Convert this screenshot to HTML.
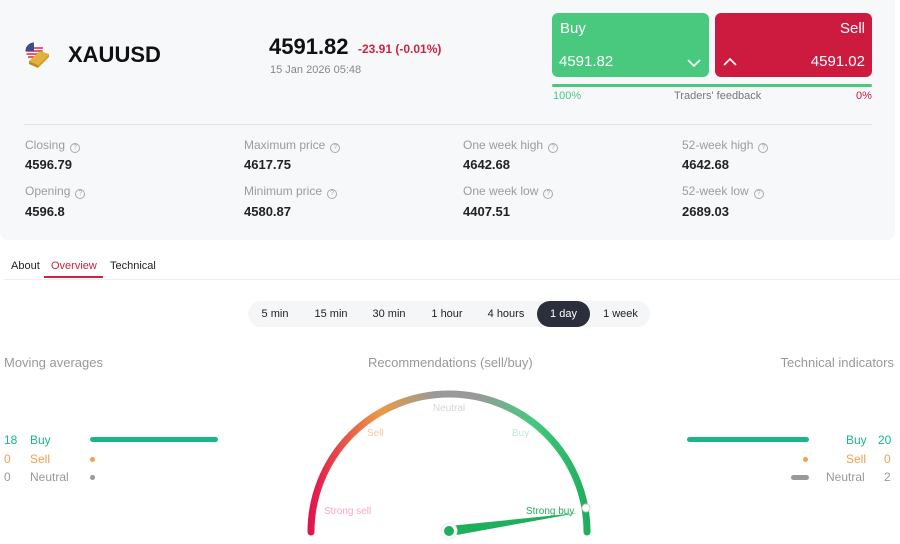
<!DOCTYPE html>
<html><head><meta charset="utf-8"><style>
*{margin:0;padding:0;box-sizing:border-box}
body{width:900px;height:544px;overflow:hidden;background:#fff;font-family:"Liberation Sans",Arial,sans-serif;position:relative;color:#222}
.abs{position:absolute}
.panel{left:0;top:0;width:895px;height:240px;background:#f7f8fa;border-radius:0 0 8px 8px}
.lbl{font-size:12px;color:#9a9ca3}
.val{font-size:13px;font-weight:bold;color:#222}
.q{display:inline-block;width:10px;height:10px;border:1px solid #aaa;border-radius:50%;font-size:7px;line-height:8px;text-align:center;color:#aaa;margin-left:5px;vertical-align:0}
.btn{top:13px;width:157px;height:64px;border-radius:6px;color:#fff}
.tf{font-size:11px}
.tab{font-size:11px;top:260px}
.seg{top:301px;left:248px;width:402px;height:26px;background:#f5f6f8;border-radius:13px}
.seg span{position:absolute;top:0;height:26px;line-height:27px;font-size:11px;color:#222;text-align:center}
.h{font-size:13px;color:#999;top:355px}
.row{font-size:12px}
</style></head><body>
<div class="abs panel"></div>
<svg class="abs" style="left:24px;top:41px" width="30" height="30" viewBox="0 0 30 30">
<circle cx="10" cy="10" r="8.5" fill="#fff"/>
<path d="M2 7h17M1.6 10h17M2.5 13h15M4 16h12" stroke="#d7263d" stroke-width="1.6"/>
<path d="M10 1.5A8.5 8.5 0 0 0 1.5 10H10z" fill="#3c4c8c"/>
<path d="M5 20l11-10 9 3-11 11z" fill="#e4b13a"/><path d="M5 20l9 4 0 3-9-4z" fill="#c28a1c"/><path d="M14 24l11-11v3l-11 11z" fill="#d49e2b"/>
</svg>
<div class="abs" style="left:68px;top:42px;font-size:22px;font-weight:bold;color:#111">XAUUSD</div>
<div class="abs" style="left:269px;top:34px;font-size:22px;font-weight:bold;color:#111">4591.82</div>
<div class="abs" style="left:358px;top:42px;font-size:12px;font-weight:bold;color:#d0223f">-23.91 (-0.01%)</div>
<div class="abs" style="left:270px;top:64px;font-size:11px;color:#888">15 Jan 2026 05:48</div>
<div class="abs btn" style="left:552px;background:#48c97e"><div class="abs" style="left:8px;top:7px;font-size:15px">Buy</div><div class="abs" style="left:7px;top:40px;font-size:15px">4591.82</div>
<svg class="abs" style="left:135px;top:45px" width="14" height="10"><path d="M1 2l6 6 6-6" stroke="#fff" stroke-width="1.6" fill="none"/></svg></div>
<div class="abs btn" style="left:715px;background:#cd1b40"><div class="abs" style="right:7px;top:7px;font-size:15px">Sell</div><div class="abs" style="right:7px;top:40px;font-size:15px">4591.02</div>
<svg class="abs" style="left:8px;top:44px" width="14" height="10"><path d="M1 8l6-6 6 6" stroke="#fff" stroke-width="1.6" fill="none"/></svg></div>
<div class="abs" style="left:552px;top:84px;width:320px;height:3px;background:#48c97e;border-radius:2px"></div>
<div class="abs tf" style="left:553px;top:90px;color:#48c97e">100%</div>
<div class="abs tf" style="left:674px;top:90px;color:#777">Traders' feedback</div>
<div class="abs tf" style="left:856px;top:90px;color:#cd1b40">0%</div>
<div class="abs" style="left:24px;top:124px;width:848px;height:1px;background:#e3e4e8"></div>
<div class="abs lbl" style="left:25px;top:138px">Closing<span class="q">?</span></div><div class="abs val" style="left:25px;top:157px">4596.79</div>
<div class="abs lbl" style="left:25px;top:184px">Opening<span class="q">?</span></div><div class="abs val" style="left:25px;top:204px">4596.8</div>
<div class="abs lbl" style="left:244px;top:138px">Maximum price<span class="q">?</span></div><div class="abs val" style="left:244px;top:157px">4617.75</div>
<div class="abs lbl" style="left:244px;top:184px">Minimum price<span class="q">?</span></div><div class="abs val" style="left:244px;top:204px">4580.87</div>
<div class="abs lbl" style="left:463px;top:138px">One week high<span class="q">?</span></div><div class="abs val" style="left:463px;top:157px">4642.68</div>
<div class="abs lbl" style="left:463px;top:184px">One week low<span class="q">?</span></div><div class="abs val" style="left:463px;top:204px">4407.51</div>
<div class="abs lbl" style="left:682px;top:138px">52-week high<span class="q">?</span></div><div class="abs val" style="left:682px;top:157px">4642.68</div>
<div class="abs lbl" style="left:682px;top:184px">52-week low<span class="q">?</span></div><div class="abs val" style="left:682px;top:204px">2689.03</div>
<div class="abs tab" style="left:11px">About</div>
<div class="abs tab" style="left:51px;color:#d0223f">Overview</div>
<div class="abs tab" style="left:110px">Technical</div>
<div class="abs" style="left:44px;top:276px;width:59px;height:2px;background:#d0223f"></div>
<div class="abs" style="left:4px;top:279px;width:896px;height:1px;background:#eceef1"></div>
<div class="abs seg">
<span style="left:8px;width:38px">5 min</span><span style="left:62px;width:42px">15 min</span><span style="left:120px;width:42px">30 min</span><span style="left:178px;width:42px">1 hour</span><span style="left:235px;width:46px">4 hours</span>
<span style="left:289px;width:53px;background:#2b2e3b;color:#fff;border-radius:13px">1 day</span><span style="left:350px;width:45px">1 week</span></div>
<div class="abs h" style="left:4px">Moving averages</div>
<div class="abs h" style="left:368px">Recommendations (sell/buy)</div>
<div class="abs h" style="right:6px">Technical indicators</div>
<div class="abs row" style="left:4px;top:433px;color:#1bb58a">18</div><div class="abs row" style="left:30px;top:433px;color:#1bb58a">Buy</div>
<div class="abs" style="left:90px;top:437px;width:128px;height:5px;border-radius:3px;background:#1bb58a"></div>
<div class="abs row" style="left:4px;top:452px;color:#f0a050">0</div><div class="abs row" style="left:30px;top:452px;color:#f0a050">Sell</div>
<div class="abs" style="left:90px;top:457px;width:5px;height:5px;border-radius:50%;background:#f0a050"></div>
<div class="abs row" style="left:4px;top:470px;color:#999">0</div><div class="abs row" style="left:30px;top:470px;color:#999">Neutral</div>
<div class="abs" style="left:90px;top:475px;width:5px;height:5px;border-radius:50%;background:#999"></div>
<div class="abs" style="left:687px;top:437px;width:122px;height:5px;border-radius:3px;background:#1bb58a"></div>
<div class="abs row" style="left:846px;top:433px;color:#1bb58a">Buy</div><div class="abs row" style="left:878px;top:433px;color:#1bb58a">20</div>
<div class="abs" style="left:803px;top:457px;width:5px;height:5px;border-radius:50%;background:#f0a050"></div>
<div class="abs row" style="left:846px;top:452px;color:#f0a050">Sell</div><div class="abs row" style="left:884px;top:452px;color:#f0a050">0</div>
<div class="abs" style="left:791px;top:475px;width:18px;height:5px;border-radius:3px;background:#999"></div>
<div class="abs row" style="left:826px;top:470px;color:#999">Neutral</div><div class="abs row" style="left:884px;top:470px;color:#999">2</div>
<svg class="abs" style="left:0;top:0" width="900" height="544">
<defs><linearGradient id="g" x1="310" y1="0" x2="588" y2="0" gradientUnits="userSpaceOnUse">
<stop offset="0" stop-color="#e0144e"/><stop offset="0.25" stop-color="#eb9a45"/><stop offset="0.45" stop-color="#999"/><stop offset="0.6" stop-color="#999"/><stop offset="0.8" stop-color="#46c880"/><stop offset="1" stop-color="#1fae5c"/></linearGradient></defs>
<path d="M311 532A138 138 0 0 1 587 532" stroke="url(#g)" stroke-width="7" fill="none" stroke-linecap="round"/>
<circle cx="586" cy="508" r="4" fill="#fff" stroke="#ccc" stroke-width="1"/>
<path d="M449 526L578 513L451 536z" fill="#1fae5c"/>
<circle cx="449" cy="531" r="8" fill="#fff" stroke="#eee"/>
<circle cx="449" cy="531" r="5" fill="#1fae5c"/>
<g font-family="Liberation Sans,Arial,sans-serif" font-size="10">
<text x="449" y="411" text-anchor="middle" fill="#d5d5d5">Neutral</text>
<text x="367" y="436" fill="#f5c9a0">Sell</text>
<text x="512" y="436" fill="#bfe9d6">Buy</text>
<text x="324" y="514" fill="#f4a9c0">Strong sell</text>
<text x="526" y="514" fill="#1fae5c">Strong buy</text></g>
</svg>
</body></html>
